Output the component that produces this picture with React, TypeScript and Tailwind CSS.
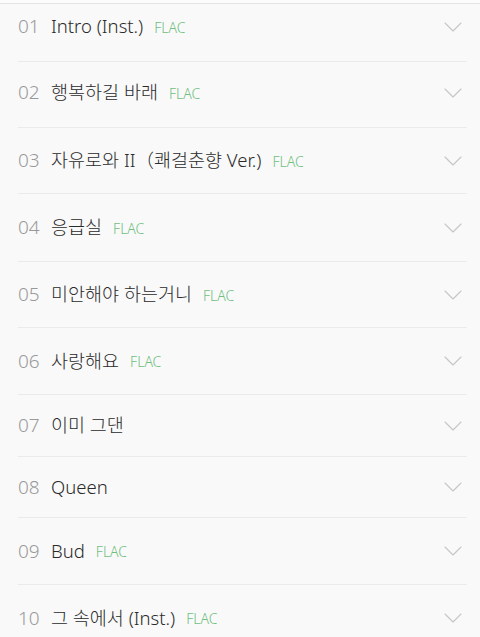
import React from "react";

type Track = { n: string; title: string; flac: boolean; h: string };

const tracks: Track[] = [
  { n: "01", title: "Intro (Inst.)", flac: true, h: "h-[58px] pb-[12px]" },
  { n: "02", title: "행복하길 바래", flac: true, h: "h-[66px] pb-[4px]" },
  { n: "03", title: "자유로와 II（쾌걸춘향 Ver.)", flac: true, h: "h-[66px]" },
  { n: "04", title: "응급실", flac: true, h: "h-[68px]" },
  { n: "05", title: "미안해야 하는거니", flac: true, h: "h-[66px]" },
  { n: "06", title: "사랑해요", flac: true, h: "h-[67px]" },
  { n: "07", title: "이미 그댄", flac: false, h: "h-[62px]" },
  { n: "08", title: "Queen", flac: false, h: "h-[61px]" },
  { n: "09", title: "Bud", flac: true, h: "h-[67px]" },
  { n: "10", title: "그 속에서 (Inst.)", flac: true, h: "h-[66px]" },
];

function Chevron() {
  return (
    <svg width="18" height="10" viewBox="0 0 18 10" fill="none">
      <polyline points="1,1 9,9 17,1" stroke="#c6c6c6" strokeWidth="1.1" strokeLinecap="round" strokeLinejoin="round" />
    </svg>
  );
}

export default function App() {
  return (
    <div
      className="w-[480px] h-[637px] overflow-hidden bg-[#f9f9f9]"
      style={{ fontFamily: '"Noto Sans", "Noto Sans CJK KR", sans-serif' }}
    >
      <div className="h-[4px] bg-[#fcfcfc] border-b border-[#e4e4e4]" />
      <div className="pl-[18px] pr-[13px]">
        {tracks.map((t, i) => (
          <div
            key={t.n}
            className={`${t.h} flex items-center ${i < tracks.length - 1 ? "border-b border-[#ebebeb]" : ""}`}
          >
            <span className="w-[33px] text-[19px] font-light text-[#999999] leading-none">{t.n}</span>
            <span className="text-[18.5px] font-light text-[#2a2a2a] leading-none">{t.title}</span>
            {t.flac && (
              <span className="ml-[11px] text-[14px] font-light text-[#6fbf7e] leading-none mt-[2px]">FLAC</span>
            )}
            <div className="ml-auto mr-[5px] flex items-center">
              <Chevron />
            </div>
          </div>
        ))}
      </div>
    </div>
  );
}
